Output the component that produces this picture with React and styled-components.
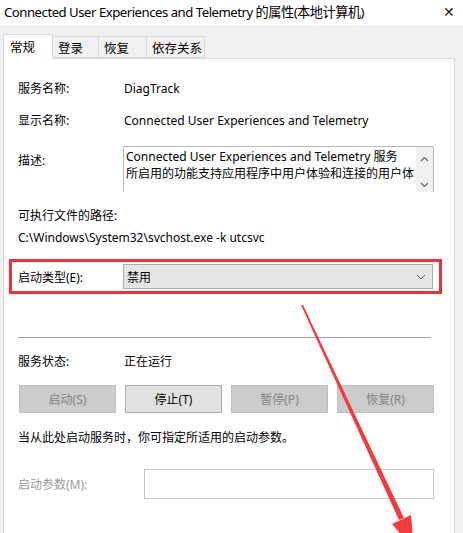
import styled, { createGlobalStyle } from "styled-components";

const GlobalStyle = createGlobalStyle`
  html, body {
    margin: 0;
    padding: 0;
    background: #f0f0f0;
  }
  body {
    font-family: "Noto Sans", "Noto Sans CJK SC", sans-serif;
    font-size: 12px;
    color: #000;
  }
`;

const tabs = [
  { label: "常规", width: 50, active: true },
  { label: "登录", width: 46 },
  { label: "恢复", width: 48 },
  { label: "依存关系", width: 58 },
];

function App() {
  return (
    <Window>
      <GlobalStyle />
      <TitleBar>
        <Title>Connected User Experiences and Telemetry 的属性(本地计算机)</Title>
        <Close>✕</Close>
      </TitleBar>

      <Body>
        <TabStrip>
          {tabs.map((t) => (
            <Tab key={t.label} $active={t.active} $w={t.width}>
              {t.label}
            </Tab>
          ))}
        </TabStrip>

        <Panel>
          <Row $top={20}>
            <Label>服务名称:</Label>
            <Value>DiagTrack</Value>
          </Row>
          <Row $top={14}>
            <Label>显示名称:</Label>
            <Value>Connected User Experiences and Telemetry</Value>
          </Row>
          <DescRow>
            <Label $pad={5}>描述:</Label>
            <DescBox>
              <DescText>
                <Line>Connected User Experiences and Telemetry 服务</Line>
                <Line>所启用的功能支持应用程序中用户体验和连接的用户体</Line>
              </DescText>
              <ScrollBar>
                <svg width="9" height="6" viewBox="0 0 9 6">
                  <path d="M1 5 L4.5 1.5 L8 5" fill="none" stroke="#606060" strokeWidth="1.2" />
                </svg>
                <svg width="9" height="6" viewBox="0 0 9 6">
                  <path d="M1 1 L4.5 4.5 L8 1" fill="none" stroke="#606060" strokeWidth="1.2" />
                </svg>
              </ScrollBar>
            </DescBox>
          </DescRow>

          <PathLabel>可执行文件的路径:</PathLabel>
          <PathValue>C:\Windows\System32\svchost.exe -k utcsvc</PathValue>

          <Highlight>
            <Label>启动类型(E):</Label>
            <Select>
              <span>禁用</span>
              <svg width="10" height="6" viewBox="0 0 10 6">
                <path d="M1 1 L5 5 L9 1" fill="none" stroke="#555" strokeWidth="1" />
              </svg>
            </Select>
          </Highlight>

          <Separator />

          <Row $top={14}>
            <Label>服务状态:</Label>
            <Value>正在运行</Value>
          </Row>

          <ButtonRow>
            <Button disabled>启动(S)</Button>
            <Button>停止(T)</Button>
            <Button disabled>暂停(P)</Button>
            <Button disabled>恢复(R)</Button>
          </ButtonRow>

          <Hint>当从此处启动服务时，你可指定所适用的启动参数。</Hint>

          <ParamRow>
            <Label $muted $width={126}>启动参数(M):</Label>
            <ParamInput />
          </ParamRow>
        </Panel>
      </Body>

      <Arrow width="463" height="533" viewBox="0 0 463 533">
        <polygon points="301,305 303,305 404,518 399,520" fill="#f33b3b" />
        <polygon points="392,524 411,515 414,550" fill="#f33b3b" />
      </Arrow>
    </Window>
  );
}

const Window = styled.div`
  position: relative;
  width: 463px;
  height: 533px;
  overflow: hidden;
  display: flex;
  flex-direction: column;
`;

const TitleBar = styled.div`
  height: 25px;
  background: #fff;
  display: flex;
  align-items: center;
  justify-content: space-between;
  padding: 0 8px 0 4px;
`;

const Title = styled.div`
  font-size: 13.2px;
  letter-spacing: -0.5px;
  color: #000;
  white-space: nowrap;
  margin-top: -3px;
`;

const Close = styled.div`
  font-size: 14px;
  color: #222;
  margin-top: -3px;
`;

const Body = styled.div`
  flex: 1;
  padding: 9px 8px 0 3px;
  display: flex;
  flex-direction: column;
`;

const TabStrip = styled.div`
  display: flex;
  align-items: flex-end;
  height: 24px;
  position: relative;
  z-index: 1;
`;

const Tab = styled.div`
  box-sizing: border-box;
  white-space: nowrap;
  width: ${(p) => p.$w}px;
  height: ${(p) => (p.$active ? "25px" : "22px")};
  margin-bottom: ${(p) => (p.$active ? "-1px" : "0")};
  padding: ${(p) => (p.$active ? "0 0 2px 6px" : "0 0 0 5px")};
  background: ${(p) => (p.$active ? "#fff" : "#f0f0f0")};
  border: 1px solid #d9d9d9;
  border-bottom: ${(p) => (p.$active ? "none" : "1px solid #d9d9d9")};
  border-left: ${(p) => (p.$active ? "1px solid #d9d9d9" : "none")};
  display: flex;
  align-items: center;
  font-size: 12.5px;
`;

const Panel = styled.div`
  flex: 1;
  background: #fff;
  border: 1px solid #d9d9d9;
  border-bottom: none;
  padding: 0 20px 0 14px;
  display: flex;
  flex-direction: column;
`;

const Row = styled.div`
  display: flex;
  align-items: center;
  height: 18px;
  margin-top: ${(p) => p.$top}px;
`;

const Label = styled.div`
  width: ${(p) => p.$width || 106}px;
  flex-shrink: 0;
  color: ${(p) => (p.$muted ? "#9a9a9a" : "#000")};
  padding-top: ${(p) => p.$pad || 0}px;
  white-space: nowrap;
`;

const Value = styled.div`
  white-space: nowrap;
`;

const DescRow = styled.div`
  display: flex;
  align-items: flex-start;
  margin-top: 17px;
`;

const DescBox = styled.div`
  box-sizing: border-box;
  width: 311px;
  height: 46px;
  margin-left: -1px;
  border: 1px solid #b8b8b8;
  border-bottom: none;
  display: flex;
`;

const DescText = styled.div`
  flex: 1;
  padding: 1px 0 0 2px;
  line-height: 17px;
`;

const Line = styled.div`
  white-space: nowrap;
`;

const ScrollBar = styled.div`
  width: 17px;
  background: #f0f0f0;
  display: flex;
  flex-direction: column;
  justify-content: space-between;
  align-items: center;
  padding: 9px 0 4px;
`;

const PathLabel = styled.div`
  margin-top: 15px;
  height: 18px;
  line-height: 18px;
`;

const PathValue = styled.div`
  margin-top: 4px;
  height: 18px;
  line-height: 18px;
`;

const Highlight = styled.div`
  box-sizing: border-box;
  margin: 12px -8px 0 -9px;
  height: 35px;
  border: 3px solid #e8333a;
  padding: 0 6px 0 6px;
  display: flex;
  align-items: center;
`;

const Select = styled.div`
  box-sizing: border-box;
  flex: 1;
  height: 25px;
  margin-left: -1px;
  background: #e5e5e5;
  border: 1px solid #adadad;
  display: flex;
  align-items: center;
  justify-content: space-between;
  padding: 0 6px 0 3px;
`;

const Separator = styled.div`
  height: 1px;
  background: #a0a0a0;
  margin: 43px 3px 0 0;
`;

const ButtonRow = styled.div`
  display: flex;
  justify-content: space-between;
  margin-top: 15px;
  padding-left: 1px;
`;

const Button = styled.button`
  box-sizing: border-box;
  width: 97px;
  height: 28px;
  font-family: inherit;
  font-size: 12px;
  background: ${(p) => (p.disabled ? "#cccccc" : "#e1e1e1")};
  color: ${(p) => (p.disabled ? "#838383" : "#000")};
  border: 1px solid ${(p) => (p.disabled ? "#bfbfbf" : "#adadad")};
  padding: 0;
`;

const Hint = styled.div`
  margin-top: 16px;
  height: 18px;
  line-height: 18px;
`;

const ParamRow = styled.div`
  display: flex;
  align-items: center;
  margin-top: 22px;
`;

const ParamInput = styled.div`
  box-sizing: border-box;
  flex: 1;
  height: 30px;
  border: 1px solid #c8c8c8;
  background: #fff;
`;

const Arrow = styled.svg`
  position: absolute;
  left: 0;
  top: 0;
  pointer-events: none;
`;

export default App;
